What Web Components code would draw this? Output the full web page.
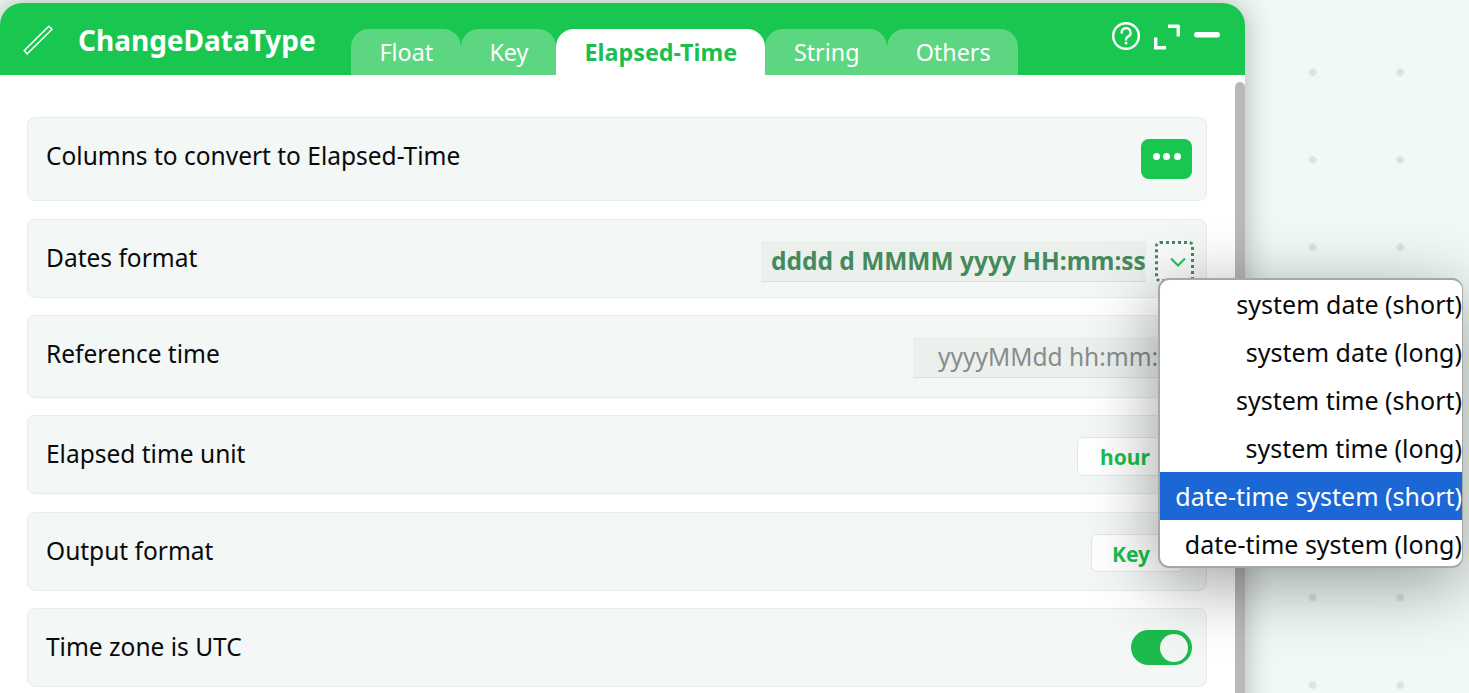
<!DOCTYPE html>
<html lang="en">
<head>
<meta charset="utf-8">
<title>ChangeDataType</title>
<style>
    html, body { margin: 0; height: 100%; overflow: hidden; }
    body {
        font-family: "Noto Sans", sans-serif;
        background-color: #f0f9f5;
        background-image: radial-gradient(circle, #dde3e0 3.5px, transparent 4.2px);
        background-size: 87.6px 87.55px;
        background-position: 1268.8px 28.5px;
    }
</style>
</head>
<body>
<app-window>
    <span slot="title">ChangeDataType</span>
    <tab-item slot="tabs">Float</tab-item>
    <tab-item slot="tabs">Key</tab-item>
    <tab-item slot="tabs" active>Elapsed-Time</tab-item>
    <tab-item slot="tabs">String</tab-item>
    <tab-item slot="tabs">Others</tab-item>

    <option-row style="--row-h: 84px; --row-gap: 18px">
        Columns to convert to Elapsed-Time
        <dots-button slot="control"></dots-button>
    </option-row>
    <option-row style="--row-h: 79px; --row-gap: 17px">
        Dates format
        <combo-field slot="control" value="dddd d MMMM yyyy HH:mm:ss" width="385" strong></combo-field>
    </option-row>
    <option-row style="--row-h: 83px; --row-gap: 17px">
        Reference time
        <combo-field slot="control" value="yyyyMMdd hh:mm:ss" width="279" bare></combo-field>
    </option-row>
    <option-row style="--row-h: 79px; --row-gap: 18px">
        Elapsed time unit
        <pick-box slot="control" style="--box-w: 113px; --box-h: 39px; --box-right: 2px; --box-pad: 22px">hour</pick-box>
    </option-row>
    <option-row style="--row-h: 79px; --row-gap: 17px">
        Output format
        <pick-box slot="control" style="--box-w: 94px; --box-h: 38px; --box-right: 7px; --box-pad: 20px">Key</pick-box>
    </option-row>
    <option-row style="--row-h: 79px; --row-gap: 17px">
        Time zone is UTC
        <toggle-switch slot="control"></toggle-switch>
    </option-row>
</app-window>

<popup-menu>
    <menu-option>system date (short)</menu-option>
    <menu-option>system date (long)</menu-option>
    <menu-option>system time (short)</menu-option>
    <menu-option>system time (long)</menu-option>
    <menu-option selected>date-time system (short)</menu-option>
    <menu-option>date-time system (long)</menu-option>
</popup-menu>

<script>
class AppWindow extends HTMLElement {
    constructor() {
        super();
        this.attachShadow({ mode: 'open' });
        this.shadowRoot.innerHTML = `
            <style>
                :host {
                    display: flex;
                    flex-direction: column;
                    width: 1245px;
                    height: 720px;
                    margin-top: 3px;
                    background: white;
                    border-radius: 22px 22px 0 0;
                    box-shadow: 0 0 30px rgba(0,0,0,0.28);
                    position: relative;
                    overflow: hidden;
                }
                .header {
                    height: 72px;
                    flex: none;
                    background: #19c650;
                    color: white;
                    display: flex;
                    align-items: flex-end;
                }
                .pencil { width: 30px; height: 30px; margin: 0 0 20px 23px; flex: none; align-self: flex-end; }
                .title {
                    font-size: 28px;
                    font-weight: 700;
                    line-height: 38px;
                    width: 273px;
                    margin: 0 0 16px 25px;
                    flex: none;
                }
                .tabs { display: flex; flex: 1; align-items: flex-end; }
                .tools {
                    display: flex;
                    align-items: center;
                    gap: 13px;
                    align-self: flex-start;
                    margin: 18px 25px 0 0;
                }
                .tools svg { display: block; }
                .content {
                    padding: 42px 38px 0 27px;
                    flex: 1;
                }
                .thumb {
                    position: absolute;
                    right: 0;
                    top: 79px;
                    bottom: 0;
                    width: 10px;
                    background: #b8b9ba;
                    border-radius: 5px 5px 0 0;
                }
            </style>
            <div class="header">
                <svg class="pencil" viewBox="0 0 30 30" fill="none" stroke="white" stroke-width="1.500">
                    <path d="M1.200 25.600 25.800 1.200 29 4.200 4.200 28.800Z"/>
                </svg>
                <div class="title"><slot name="title"></slot></div>
                <div class="tabs"><slot name="tabs"></slot></div>
                <div class="tools">
                    <svg width="30" height="30" viewBox="0 0 30 30" fill="none" stroke="white">
                        <circle cx="15" cy="15" r="12.800" stroke-width="2.400"/>
                        <path d="M10.700 11.600a4.400 4.400 0 1 1 6.600 3.800c-1.500.9-2.300 1.500-2.300 3.200" stroke-width="2.400" stroke-linecap="round"/>
                        <circle cx="15" cy="22" r="1.500" fill="white" stroke="none"/>
                    </svg>
                    <svg width="27" height="27" viewBox="0 0 27 27" fill="none" stroke="white" stroke-width="3.400">
                        <path d="M14 3.200H24.300V13.500" stroke-linejoin="round"/>
                        <path d="M1.700 14.500V24.800H12"/>
                    </svg>
                    <svg width="26" height="6" viewBox="0 0 26 6" style="margin: 0 0 2px 0">
                        <rect width="26" height="5.500" rx="2.700" fill="white"/>
                    </svg>
                </div>
            </div>
            <div class="content"><slot></slot></div>
            <div class="thumb"></div>
        `;
    }
}

class TabItem extends HTMLElement {
    constructor() {
        super();
        this.attachShadow({ mode: 'open' });
        this.shadowRoot.innerHTML = `
            <style>
                :host {
                    display: block;
                    height: 46px;
                    line-height: 47px;
                    padding: 0 27.700px 0 28.500px;
                    font-size: 23.300px;
                    background: #5dd682;
                    color: white;
                    border-radius: 18px 18px 0 0;
                }
                :host([active]) {
                    background: white;
                    color: #19bf4f;
                    font-weight: 700;
                    padding-right: 28.300px;
                }
            </style>
            <slot></slot>
        `;
    }
}

class OptionRow extends HTMLElement {
    constructor() {
        super();
        this.attachShadow({ mode: 'open' });
        this.shadowRoot.innerHTML = `
            <style>
                :host {
                    display: flex;
                    justify-content: space-between;
                    align-items: flex-start;
                    box-sizing: border-box;
                    height: var(--row-h);
                    margin-bottom: var(--row-gap);
                    padding: 21px 14px 0 18px;
                    background: #f3f7f5;
                    border: 1px solid #e7ebe9;
                    border-radius: 8px;
                    font-size: 24.500px;
                    line-height: 33px;
                    color: #0a0a0a;
                }
            </style>
            <div class="label"><slot></slot></div>
            <slot name="control"></slot>
        `;
    }
}

class DotsButton extends HTMLElement {
    constructor() {
        super();
        this.attachShadow({ mode: 'open' });
        this.shadowRoot.innerHTML = `
            <style>
                :host {
                    display: flex;
                    align-items: center;
                    justify-content: center;
                    gap: 3.500px;
                    width: 51px;
                    height: 40px;
                    padding-bottom: 6px;
                    box-sizing: border-box;
                    background: #19c650;
                    border-radius: 8px;
                }
                i { width: 7px; height: 7px; border-radius: 50%; background: white; }
            </style>
            <i></i><i></i><i></i>
        `;
    }
}

class ComboField extends HTMLElement {
    constructor() {
        super();
        this.attachShadow({ mode: 'open' });
    }

    connectedCallback() {
        this.render();
    }

    render() {
        const bare = this.hasAttribute('bare');
        this.shadowRoot.innerHTML = `
            <style>
                :host { display: flex; align-items: flex-start; gap: 9px; }
                .input {
                    box-sizing: border-box;
                    width: ${this.getAttribute('width')}px;
                    height: 41px;
                    padding-left: ${bare ? 25 : 10}px;
                    background: #ebf0ed;
                    border-bottom: 1px solid #d8e3dd;
                    font-size: 24.500px;
                    line-height: 39px;
                    white-space: nowrap;
                    overflow: hidden;
                    color: #888c8c;
                }
                :host([strong]) .input { font-weight: 700; color: #458a5c; }
                .drop {
                    box-sizing: border-box;
                    width: 39px;
                    height: 41px;
                    margin-right: -2px;
                    padding-left: 6px;
                    border: 3px dotted #458a5c;
                    border-radius: 5px;
                    background: #fafcfb;
                    display: flex;
                    align-items: center;
                    justify-content: center;
                }
            </style>
            <div class="input">${this.getAttribute('value')}</div>
            ${bare ? '' : `<div class="drop">
                <svg width="16" height="10" viewBox="0 0 16 10" fill="none" stroke="#19c650" stroke-width="2">
                    <path d="M1 1.500 8 8.500 15 1.500"/>
                </svg>
            </div>`}
        `;
    }
}

class PickBox extends HTMLElement {
    constructor() {
        super();
        this.attachShadow({ mode: 'open' });
        this.shadowRoot.innerHTML = `
            <style>
                :host {
                    display: block;
                    box-sizing: border-box;
                    width: var(--box-w);
                    height: var(--box-h);
                    margin-right: var(--box-right);
                    padding-left: var(--box-pad);
                    background: white;
                    border: 1px solid #e2e7e4;
                    border-radius: 6px;
                    font-size: 21px;
                    font-weight: 700;
                    line-height: 38px;
                    color: #19bf4f;
                }
            </style>
            <slot></slot>
        `;
    }
}

class ToggleSwitch extends HTMLElement {
    constructor() {
        super();
        this.attachShadow({ mode: 'open' });
        this.shadowRoot.innerHTML = `
            <style>
                :host {
                    display: flex;
                    align-items: center;
                    justify-content: flex-end;
                    box-sizing: border-box;
                    width: 61px;
                    height: 35px;
                    padding-right: 4px;
                    background: #1bbb4d;
                    border-radius: 18px;
                }
                i { width: 28px; height: 28px; border-radius: 50%; background: #f2f6f3; }
            </style>
            <i></i>
        `;
    }
}

class PopupMenu extends HTMLElement {
    constructor() {
        super();
        this.attachShadow({ mode: 'open' });
        this.shadowRoot.innerHTML = `
            <style>
                :host {
                    display: block;
                    position: absolute;
                    left: 1158px;
                    top: 278px;
                    box-sizing: border-box;
                    width: 305px;
                    height: 290px;
                    background: white;
                    border: 2px solid #a5a8a6;
                    border-right-width: 1px;
                    border-radius: 11px;
                    box-shadow: 0 16px 70px rgba(0,0,0,0.38);
                    overflow: hidden;
                }
            </style>
            <slot></slot>
        `;
    }
}

class MenuOption extends HTMLElement {
    constructor() {
        super();
        this.attachShadow({ mode: 'open' });
        this.shadowRoot.innerHTML = `
            <style>
                :host {
                    display: block;
                    height: 48px;
                    line-height: 48px;
                    font-size: 25px;
                    text-align: right;
                    color: #0a0a0a;
                    white-space: nowrap;
                }
                :host([selected]) { background: #1b67d6; color: white; }
            </style>
            <slot></slot>
        `;
    }
}

customElements.define('app-window', AppWindow);
customElements.define('tab-item', TabItem);
customElements.define('option-row', OptionRow);
customElements.define('dots-button', DotsButton);
customElements.define('combo-field', ComboField);
customElements.define('pick-box', PickBox);
customElements.define('toggle-switch', ToggleSwitch);
customElements.define('popup-menu', PopupMenu);
customElements.define('menu-option', MenuOption);
</script>
</body>
</html>
